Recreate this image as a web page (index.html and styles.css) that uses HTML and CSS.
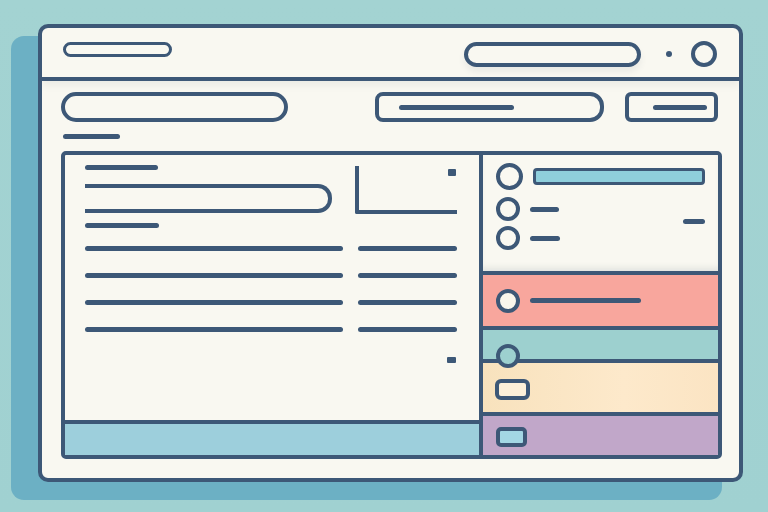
FILE: index.html
```html
<!DOCTYPE html>
<html lang="en">
<head>
<meta charset="utf-8">
<title>Window</title>
<link rel="stylesheet" href="styles.css">
</head>
<body>
<div class="window">
  <div class="titlebar">
    <div class="title-pill"></div>
    <div class="search"></div>
    <div class="dot"></div>
    <div class="circle-btn"></div>
  </div>
  <div class="body">
    <div class="toolbar">
      <div class="field"></div>
      <div class="btn-wide"><span class="line l115"></span></div>
      <div class="btn-small"><span class="line l54"></span></div>
    </div>
    <div class="line underline"></div>
    <div class="panel">
      <div class="left">
        <div class="left-content">
          <div class="top-block">
            <div class="col1">
              <div class="line l73"></div>
              <div class="pill-line"></div>
              <div class="line l74"></div>
            </div>
            <div class="lbox"><span class="sq"></span></div>
          </div>
          <div class="rows">
            <div class="row"><span class="line l258"></span><span class="line l99"></span></div>
            <div class="row"><span class="line l258"></span><span class="line l99"></span></div>
            <div class="row"><span class="line l258"></span><span class="line l99"></span></div>
            <div class="row"><span class="line l258"></span><span class="line l99"></span></div>
          </div>
          <div class="sq sq2"></div>
        </div>
        <div class="left-footer"></div>
      </div>
      <div class="right">
        <div class="sec-top">
          <div class="item first"><span class="ring big"></span><span class="bar"></span></div>
          <div class="item second"><span class="ring"></span><span class="line l29"></span><span class="line dash"></span></div>
          <div class="item third"><span class="ring"></span><span class="line l30"></span></div>
        </div>
        <div class="sec sec-pink"><span class="ring cream"></span><span class="line l111"></span></div>
        <div class="sec sec-teal"><span class="ring teal over"></span></div>
        <div class="sec sec-yellow"><span class="chip chip-yellow"></span></div>
        <div class="sec sec-purple"><span class="chip chip-blue"></span></div>
      </div>
    </div>
  </div>
</div>
</body>
</html>
```

FILE: styles.css
```css
* { box-sizing: border-box; }
html, body { margin: 0; padding: 0; }
body {
  width: 768px;
  height: 512px;
  overflow: hidden;
  background: linear-gradient(180deg, #a3d3d2 0%, #a0d1d1 100%);
  padding: 24px 0 0 38px;
}
.window {
  width: 705px;
  height: 458px;
  border: 4px solid #3d5877;
  border-radius: 10px;
  background: #f9f8f1;
  box-shadow: -24px 15px 0 3px #6cb0c4;
  overflow: hidden;
}
.titlebar {
  height: 53px;
  border-bottom: 4px solid #3d5877;
  display: flex;
  align-items: flex-start;
  padding: 0 22px 0 21px;
  box-shadow: 0 5px 7px rgba(60, 80, 100, 0.07);
  position: relative;
}
.title-pill {
  margin-top: 14px;
  width: 109px;
  height: 15px;
  border: 3.5px solid #3d5877;
  border-radius: 8px;
}
.search {
  margin-left: auto;
  margin-top: 14px;
  width: 177px;
  height: 25px;
  border: 4px solid #3d5877;
  border-radius: 13px;
  box-shadow: 0 5px 6px rgba(60, 80, 100, 0.08);
}
.dot {
  margin-left: 25px;
  margin-top: 23px;
  width: 6px;
  height: 6px;
  border-radius: 50%;
  background: #3d5877;
}
.circle-btn {
  margin-left: 19px;
  margin-top: 13px;
  width: 26px;
  height: 26px;
  border: 4px solid #3d5877;
  border-radius: 50%;
}
.body {
  padding: 11px 17px 0 19px;
}
.toolbar {
  display: flex;
  height: 30px;
}
.field {
  width: 227px;
  height: 30px;
  border: 4px solid #3d5877;
  border-radius: 15px;
}
.btn-wide {
  margin-left: 87px;
  width: 229px;
  height: 30px;
  border: 4px solid #3d5877;
  border-radius: 8px 14px 14px 8px;
  display: flex;
  align-items: center;
  padding-left: 20px;
}
.btn-small {
  margin-left: 21px;
  width: 93px;
  height: 30px;
  border: 4px solid #3d5877;
  border-radius: 6px;
  display: flex;
  align-items: center;
  padding-left: 24px;
}
.line {
  display: block;
  height: 5px;
  border-radius: 2.5px;
  background: #3d5877;
  flex: none;
}
.l115 { width: 115px; }
.l54 { width: 54px; }
.l73 { width: 73px; }
.l74 { width: 74px; }
.l258 { width: 258px; }
.l99 { width: 99px; }
.l29 { width: 29px; }
.l30 { width: 30px; }
.l111 { width: 111px; }
.underline {
  margin-top: 12px;
  margin-left: 2px;
  width: 57px;
}
.panel {
  margin-top: 12px;
  width: 661px;
  height: 308px;
  border: 4px solid #3d5877;
  border-radius: 5px;
  display: flex;
  overflow: hidden;
}
.left {
  width: 414px;
  display: flex;
  flex-direction: column;
}
.left-content {
  flex: 1;
  padding: 10px 22px 0 20px;
  display: flex;
  flex-direction: column;
}
.top-block {
  display: flex;
  gap: 12px;
}
.col1 {
  width: 258px;
  display: flex;
  flex-direction: column;
}
.pill-line {
  margin-top: 14px;
  width: 247px;
  height: 29px;
  border: 4px solid #3d5877;
  border-left: none;
  border-radius: 0 14px 14px 0;
}
.col1 .l74 { margin-top: 10px; }
.lbox {
  margin-top: 1px;
  width: 102px;
  height: 48px;
  border-left: 4px solid #3d5877;
  border-bottom: 4px solid #3d5877;
  border-bottom-left-radius: 2px;
  display: flex;
  justify-content: flex-end;
  align-items: flex-start;
  padding-top: 3px;
  padding-right: 1px;
}
.sq {
  display: block;
  width: 8px;
  height: 7px;
  background: #3d5877;
  border-radius: 1px;
}
.rows {
  margin-top: 18px;
  display: flex;
  flex-direction: column;
  gap: 22px;
}
.row {
  display: flex;
  gap: 15px;
}
.sq2 {
  margin-top: 25px;
  align-self: flex-end;
  margin-right: 1px;
  width: 9px;
  height: 6px;
}
.left-footer {
  height: 35px;
  border-top: 4px solid #3d5877;
  background: #9dcfdc;
}
.right {
  width: 239px;
  border-left: 4px solid #3d5877;
  display: flex;
  flex-direction: column;
}
.sec-top {
  height: 116px;
  padding: 8px 13px 0 13px;
  background: #f9f8f1;
  box-shadow: inset 0 -6px 6px -3px rgba(60, 80, 100, 0.12);
  display: flex;
  flex-direction: column;
}
.item {
  display: flex;
  align-items: center;
  gap: 10px;
}
.item.second { margin-top: 7px; }
.item.third { margin-top: 5px; }
.ring {
  display: block;
  flex: none;
  width: 24px;
  height: 24px;
  border: 4px solid #3d5877;
  border-radius: 50%;
}
.ring.big {
  width: 27px;
  height: 27px;
}
.bar {
  display: block;
  width: 173px;
  height: 17px;
  border: 3.5px solid #3d5877;
  border-radius: 4px;
  background: #8fcfdc;
}
.dash {
  width: 22px;
  margin-left: auto;
  align-self: flex-start;
  margin-top: 22px;
  margin-bottom: -3px;
}
.sec {
  border-top: 4px solid #3d5877;
  display: flex;
  align-items: center;
  padding-left: 13px;
}
.sec-pink {
  height: 55px;
  background: #f8a69d;
  gap: 10px;
}
.ring.cream { background: #f9f6ec; }
.sec-teal {
  height: 33px;
  background: #9dd0cf;
  align-items: flex-end;
}
.ring.teal { background: #9dd0cf; }
.ring.over {
  position: relative;
  z-index: 2;
  margin-bottom: -9px;
}
.sec-yellow {
  height: 53px;
  background: linear-gradient(90deg, #f8e2bd 0%, #fde9cb 60%, #fbe4c3 100%);
  padding-left: 12px;
}
.sec-purple {
  height: 43px;
  background: #c1a7c9;
}
.chip {
  display: block;
  border: 4px solid #3d5877;
  border-radius: 6px;
}
.chip-yellow {
  width: 35px;
  height: 21px;
  margin-top: 4px;
  background: #fdf0d9;
}
.chip-blue {
  width: 31px;
  height: 20px;
  margin-top: 2px;
  border-radius: 5px;
  background: #a3d7e4;
}
```
